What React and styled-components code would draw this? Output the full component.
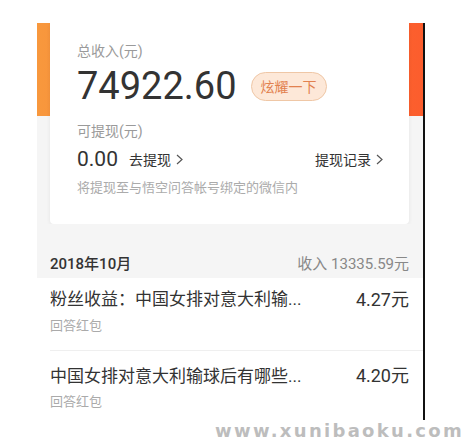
import React from "react";
import styled, { createGlobalStyle } from "styled-components";

const Global = createGlobalStyle`
  html, body { margin: 0; padding: 0; background: #ffffff; }
  body { font-family: "Roboto", "Noto Sans CJK SC", sans-serif; }
`;

const Page = styled.div`
  width: 469px;
  height: 440px;
  padding-top: 23px;
  box-sizing: border-box;
  overflow: hidden;
`;

const Phone = styled.div`
  margin-left: 37px;
  width: 386px;
  height: 397px;
  border-right: 2px solid #111;
  background-color: #ffffff;
  overflow: hidden;
`;

const Top = styled.div`
  background-color: #f5f5f5;
  background-image: linear-gradient(to right, #f8983d, #fc5d2d);
  background-size: 100% 93px;
  background-repeat: no-repeat;
  padding: 0 14px 0 13px;
`;

const Card = styled.div`
  background: #ffffff;
  border-radius: 0 0 4px 4px;
  box-shadow: 0 1px 4px rgba(0, 0, 0, 0.07);
  padding: 18px 26px 25px 27px;
  height: 201px;
  box-sizing: border-box;
`;

const Label = styled.div`
  font-size: 14px;
  line-height: 20px;
  color: #9a9a9a;
  margin-top: ${(p) => p.$mt || 0}px;
`;

const AmountRow = styled.div`
  display: flex;
  align-items: center;
  height: 44px;
  margin-top: 3px;
  gap: 14px;
`;

const Amount = styled.div`
  font-size: 38px;
  line-height: 44px;
  color: #333;
  font-weight: 400;
`;

const Badge = styled.div`
  height: 29px;
  width: 76px;
  box-sizing: border-box;
  border-radius: 15px;
  border: 1px solid #efc7a6;
  background: #fde8d8;
  color: #e2814f;
  font-size: 14px;
  display: flex;
  align-items: center;
  justify-content: center;
`;

const WithdrawRow = styled.div`
  display: flex;
  align-items: center;
  height: 28px;
  margin-top: 4px;
`;

const Small = styled.div`
  font-size: 21px;
  line-height: 28px;
  color: #333;
  margin-right: 11px;
`;

const LinkText = styled.div`
  display: flex;
  align-items: center;
  gap: 5px;
  font-size: 14px;
  color: #333;
  margin-left: ${(p) => (p.$push ? "auto" : "0")};
`;

const Hint = styled.div`
  font-size: 13px;
  line-height: 18px;
  color: #ababab;
  margin-top: 6px;
`;

const MonthBar = styled.div`
  display: flex;
  justify-content: space-between;
  align-items: center;
  height: 32px;
  padding: 22px 14px 0 13px;
  background: #f5f5f5;
  font-size: 15px;
`;

const Month = styled.div`
  color: #333;
  font-weight: 500;
`;

const Income = styled.div`
  color: #888;
`;

const Item = styled.div`
  padding-left: 13px;
  background: #fff;
`;

const ItemInner = styled.div`
  padding: ${(p) => p.$top}px 14px 0 0;
  height: ${(p) => p.$h}px;
  box-sizing: border-box;
  border-bottom: 1px solid #efefef;
`;

const ItemRow = styled.div`
  display: flex;
  justify-content: space-between;
  align-items: center;
  height: 24px;
  font-size: 17px;
  color: #333;
`;

const ItemValue = styled.span`
  font-size: 18px;
`;

const ItemSub = styled.div`
  font-size: 13px;
  line-height: 18px;
  color: #aaa;
  margin-top: 7px;
`;

const Watermark = styled.div`
  text-align: right;
  padding-right: 5px;
  margin-top: 2px;
  font-family: "DejaVu Sans", sans-serif;
  font-weight: 700;
  font-size: 18px;
  letter-spacing: 2.3px;
  line-height: 18px;
  color: #bdbdbd;
`;

const Chevron = () => (
  <svg width="7" height="11" viewBox="0 0 7 11">
    <path d="M1 1 L6 5.5 L1 10" fill="none" stroke="#555" strokeWidth="1.2" />
  </svg>
);

const items = [
  { title: "粉丝收益：中国女排对意大利输...", value: "4.27元", top: 7.5, h: 73 },
  { title: "中国女排对意大利输球后有哪些...", value: "4.20元", top: 11, h: 70 },
];

export default function App() {
  return (
    <>
      <Global />
      <Page>
        <Phone>
          <Top>
            <Card>
              <Label>总收入(元)</Label>
              <AmountRow>
                <Amount>74922.60</Amount>
                <Badge>炫耀一下</Badge>
              </AmountRow>
              <Label $mt={13}>可提现(元)</Label>
              <WithdrawRow>
                <Small>0.00</Small>
                <LinkText>
                  去提现 <Chevron />
                </LinkText>
                <LinkText $push>
                  提现记录 <Chevron />
                </LinkText>
              </WithdrawRow>
              <Hint>将提现至与悟空问答帐号绑定的微信内</Hint>
            </Card>
          </Top>
          <MonthBar>
            <Month>2018年10月</Month>
            <Income>收入 13335.59元</Income>
          </MonthBar>
          {items.map((it) => (
            <Item key={it.title}>
              <ItemInner $top={it.top} $h={it.h}>
                <ItemRow>
                  <span>{it.title}</span>
                  <ItemValue>{it.value}</ItemValue>
                </ItemRow>
                <ItemSub>回答红包</ItemSub>
              </ItemInner>
            </Item>
          ))}
        </Phone>
        <Watermark>www.xunibaoku.com</Watermark>
      </Page>
    </>
  );
}
